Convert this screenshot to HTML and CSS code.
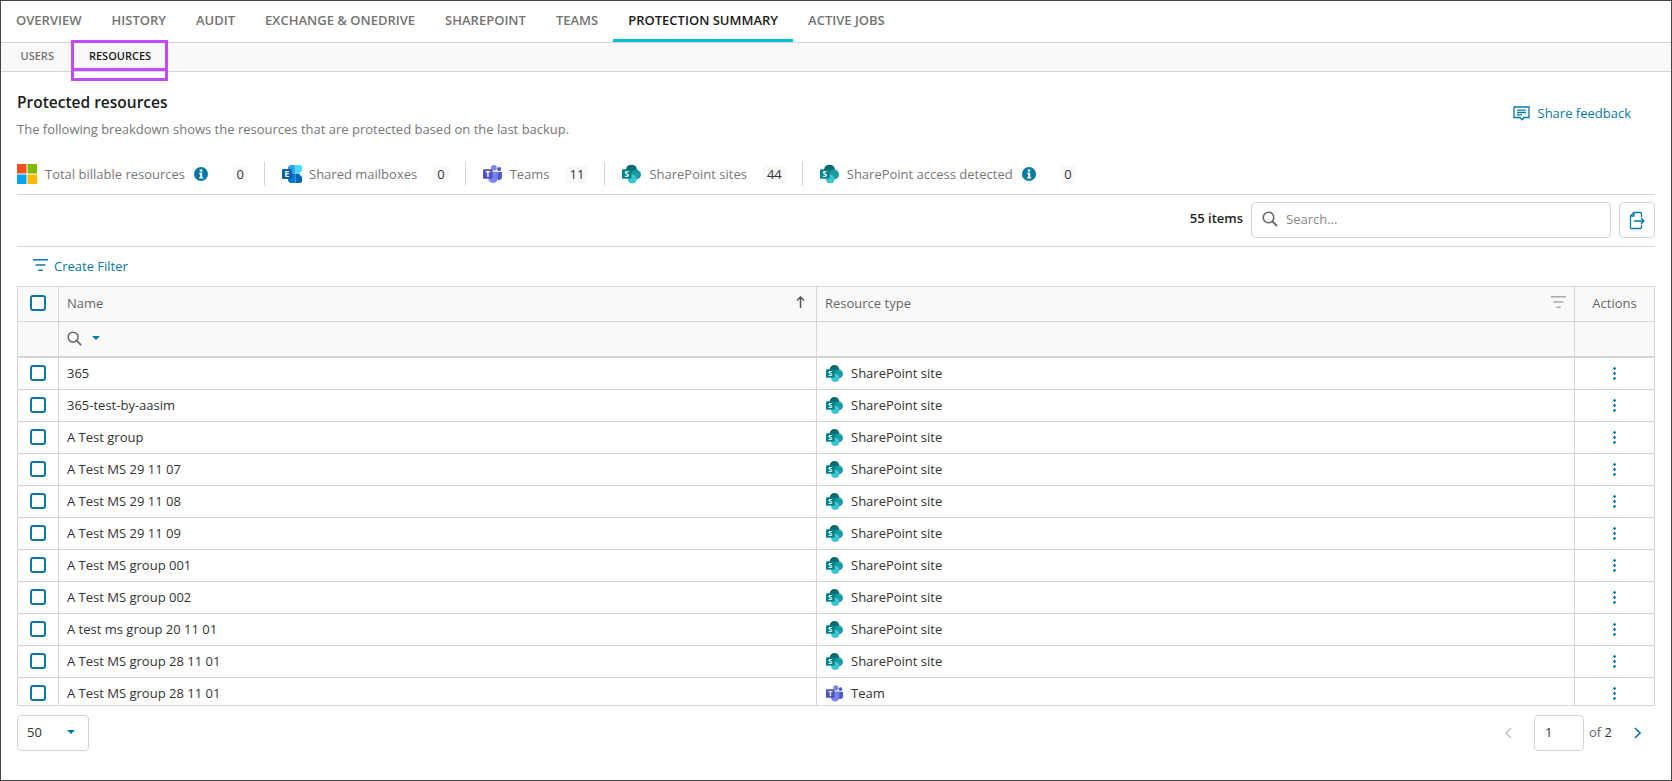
FILE: index.html
```html
<!DOCTYPE html>
<html lang="en">
<head>
    <meta charset="UTF-8">
    <title>Protection summary</title>
    <link rel="stylesheet" href="styles.css">
</head>
<body>
    <svg class="sprites" width="0" height="0">
        <symbol id="ic-ms" viewBox="0 0 20 20">
            <rect width="9.500" height="9.500" fill="#f25022"/>
            <rect x="10.500" width="9.500" height="9.500" fill="#7fba00"/>
            <rect y="10.500" width="9.500" height="9.500" fill="#00a4ef"/>
            <rect x="10.500" y="10.500" width="9.500" height="9.500" fill="#ffb900"/>
        </symbol>
        <symbol id="ic-exchange" viewBox="0 0 20 20">
            <path fill="#28a8ea" d="M8 1h5.500v9H6V3z"/>
            <path fill="#50d9ff" d="M13.500 1H18a2 2 0 0 1 2 2v4l-3 3h-3.500z"/>
            <path fill="#0078d4" d="M6 10h7.500v9H8l-2-2z"/>
            <path fill="#0364b8" d="M13.500 10H17l3 3v4a2 2 0 0 1-2 2h-4.500z"/>
            <rect y="5" width="10" height="10" rx="1" fill="#0f5ea8"/>
        </symbol>
        <symbol id="ic-teams" viewBox="0 0 20 20">
            <circle cx="17" cy="4.800" r="2.200" fill="#5059c9"/>
            <path fill="#5059c9" d="M13 8h7v5a3.500 3.500 0 0 1-7 0z"/>
            <circle cx="11.500" cy="3.400" r="3" fill="#7b83eb"/>
            <path fill="#7b83eb" d="M6 7.500h9.500V15a5 5 0 0 1-9.500 1.500z"/>
            <rect y="5" width="10" height="10" rx="1" fill="#4b53bc"/>
        </symbol>
        <symbol id="ic-sharepoint" viewBox="0 0 20 20">
            <circle cx="10" cy="5.800" r="5.800" fill="#036c70"/>
            <circle cx="14.700" cy="10.500" r="5.300" fill="#1a9ba1"/>
            <circle cx="10.800" cy="15.300" r="4.700" fill="#37c6d0"/>
            <rect y="5" width="10" height="10" rx="1" fill="#038387"/>
        </symbol>
        <symbol id="ic-info" viewBox="0 0 14 14">
            <circle cx="7" cy="7" r="7" fill="#0778a8"/>
            <circle cx="7" cy="3.600" r="1.400" fill="#fff"/>
            <path fill="#fff" d="M5.300 5.800h2.900v4.300h.9v1.400H5.200v-1.400h1V7.200h-.9z"/>
        </symbol>
        <symbol id="ic-filter" viewBox="0 0 15 13">
            <path fill="currentColor" d="M0 0h15v1.500H0zM2.500 5.200h10v1.500h-10zM5.300 10.500h4.400V12H5.300z"/>
        </symbol>
        <symbol id="ic-search" viewBox="0 0 16 16">
            <circle cx="6.500" cy="6.500" r="5.300" fill="none" stroke="currentColor" stroke-width="1.600"/>
            <path d="M10.500 10.500 15 15" fill="none" stroke="currentColor" stroke-width="1.800"/>
        </symbol>
    </svg>

    <div class="window">
        <nav class="tabs">
            <a>Overview</a>
            <a>History</a>
            <a>Audit</a>
            <a>Exchange &amp; OneDrive</a>
            <a>SharePoint</a>
            <a>Teams</a>
            <a class="active">Protection summary</a>
            <a>Active jobs</a>
        </nav>
        <nav class="subtabs">
            <a>Users</a>
            <a class="active">Resources</a>
        </nav>
        <div class="callout"></div>

        <main class="content">
            <div class="page-head">
                <div>
                    <h1>Protected resources</h1>
                    <p>The following breakdown shows the resources that are protected based on the last backup.</p>
                </div>
                <a class="feedback">
                    <svg width="17" height="15" viewBox="0 0 17 15" fill="none" stroke="currentColor" stroke-width="1.300">
                        <path d="M1 1h15v10.500h-5L9 13.800 7 11.500H1z"/>
                        <path d="M4 4.200h9M4 6.500h9M4 8.800h5"/>
                    </svg>
                    Share feedback
                </a>
            </div>

            <div class="stats">
                <div class="stat">
                    <svg class="stat-icon" viewBox="0 0 20 20"><use href="#ic-ms"/></svg>
                    <span>Total billable resources</span>
                    <svg class="info"><use href="#ic-info"/></svg>
                    <b class="count wide">0</b>
                </div>
                <div class="stat">
                    <svg class="stat-icon tight" viewBox="0 0 20 20"><use href="#ic-exchange"/><text x="5" y="13" class="ic-letter">E</text></svg>
                    <span>Shared mailboxes</span>
                    <b class="count">0</b>
                </div>
                <div class="stat">
                    <svg class="stat-icon narrow" viewBox="0 0 20 20"><use href="#ic-teams"/><text x="5" y="13" class="ic-letter">T</text></svg>
                    <span>Teams</span>
                    <b class="count">11</b>
                </div>
                <div class="stat">
                    <svg class="stat-icon narrow" viewBox="0 0 20 20"><use href="#ic-sharepoint"/><text x="5" y="13" class="ic-letter">S</text></svg>
                    <span>SharePoint sites</span>
                    <b class="count">44</b>
                </div>
                <div class="stat">
                    <svg class="stat-icon narrow" viewBox="0 0 20 20"><use href="#ic-sharepoint"/><text x="5" y="13" class="ic-letter">S</text></svg>
                    <span>SharePoint access detected</span>
                    <svg class="info"><use href="#ic-info"/></svg>
                    <b class="count wide">0</b>
                </div>
            </div>

            <div class="toolbar">
                <span class="total">55 items</span>
                <div class="search">
                    <svg width="16" height="16"><use href="#ic-search"/></svg>
                    <span>Search...</span>
                </div>
                <button class="export">
                    <svg width="16" height="19" viewBox="0 0 16 19" fill="none" stroke="currentColor" stroke-width="1.300">
                        <path d="M12.500 6V2.500a1 1 0 0 0-1-1H5L1.500 5v11.500a1 1 0 0 0 1 1h9a1 1 0 0 0 1-1V14"/>
                        <path d="M5 1.500V5H1.500M5 10h10M12 7l3 3-3 3"/>
                    </svg>
                </button>
            </div>

            <a class="create-filter">
                <svg width="15" height="13"><use href="#ic-filter"/></svg>
                Create Filter
            </a>

            <div class="grid-wrap">
                <table class="grid">
                    <colgroup>
                        <col class="col-check"><col class="col-name"><col class="col-type"><col>
                    </colgroup>
                    <thead>
                        <tr class="head-row">
                            <th><span class="check"></span></th>
                            <th>
                                <div class="th-inner">Name
                                    <svg width="9" height="12" viewBox="0 0 9 12" fill="none" stroke="#555" stroke-width="1.500"><path d="M4.500 12V1M1 4.500l3.500-3.500L8 4.500"/></svg>
                                </div>
                            </th>
                            <th>
                                <div class="th-inner">Resource type
                                    <svg class="type-filter" width="15" height="13"><use href="#ic-filter"/></svg>
                                </div>
                            </th>
                            <th class="center">Actions</th>
                        </tr>
                        <tr class="filter-row">
                            <th></th>
                            <th>
                                <div class="name-filter">
                                    <svg width="15" height="15"><use href="#ic-search"/></svg>
                                    <i class="caret"></i>
                                </div>
                            </th>
                            <th></th>
                            <th></th>
                        </tr>
                    </thead>
                    <tbody>
                        <tr><td><span class="check"></span></td><td>365</td><td><div class="type"><svg viewBox="0 0 20 20"><use href="#ic-sharepoint"/><text x="5" y="13" class="ic-letter">S</text></svg>SharePoint site</div></td><td class="center"><span class="kebab"></span></td></tr>
                        <tr><td><span class="check"></span></td><td>365-test-by-aasim</td><td><div class="type"><svg viewBox="0 0 20 20"><use href="#ic-sharepoint"/><text x="5" y="13" class="ic-letter">S</text></svg>SharePoint site</div></td><td class="center"><span class="kebab"></span></td></tr>
                        <tr><td><span class="check"></span></td><td>A Test group</td><td><div class="type"><svg viewBox="0 0 20 20"><use href="#ic-sharepoint"/><text x="5" y="13" class="ic-letter">S</text></svg>SharePoint site</div></td><td class="center"><span class="kebab"></span></td></tr>
                        <tr><td><span class="check"></span></td><td>A Test MS 29 11 07</td><td><div class="type"><svg viewBox="0 0 20 20"><use href="#ic-sharepoint"/><text x="5" y="13" class="ic-letter">S</text></svg>SharePoint site</div></td><td class="center"><span class="kebab"></span></td></tr>
                        <tr><td><span class="check"></span></td><td>A Test MS 29 11 08</td><td><div class="type"><svg viewBox="0 0 20 20"><use href="#ic-sharepoint"/><text x="5" y="13" class="ic-letter">S</text></svg>SharePoint site</div></td><td class="center"><span class="kebab"></span></td></tr>
                        <tr><td><span class="check"></span></td><td>A Test MS 29 11 09</td><td><div class="type"><svg viewBox="0 0 20 20"><use href="#ic-sharepoint"/><text x="5" y="13" class="ic-letter">S</text></svg>SharePoint site</div></td><td class="center"><span class="kebab"></span></td></tr>
                        <tr><td><span class="check"></span></td><td>A Test MS group 001</td><td><div class="type"><svg viewBox="0 0 20 20"><use href="#ic-sharepoint"/><text x="5" y="13" class="ic-letter">S</text></svg>SharePoint site</div></td><td class="center"><span class="kebab"></span></td></tr>
                        <tr><td><span class="check"></span></td><td>A Test MS group 002</td><td><div class="type"><svg viewBox="0 0 20 20"><use href="#ic-sharepoint"/><text x="5" y="13" class="ic-letter">S</text></svg>SharePoint site</div></td><td class="center"><span class="kebab"></span></td></tr>
                        <tr><td><span class="check"></span></td><td>A test ms group 20 11 01</td><td><div class="type"><svg viewBox="0 0 20 20"><use href="#ic-sharepoint"/><text x="5" y="13" class="ic-letter">S</text></svg>SharePoint site</div></td><td class="center"><span class="kebab"></span></td></tr>
                        <tr><td><span class="check"></span></td><td>A Test MS group 28 11 01</td><td><div class="type"><svg viewBox="0 0 20 20"><use href="#ic-sharepoint"/><text x="5" y="13" class="ic-letter">S</text></svg>SharePoint site</div></td><td class="center"><span class="kebab"></span></td></tr>
                        <tr><td><span class="check"></span></td><td>A Test MS group 28 11 01</td><td><div class="type"><svg viewBox="0 0 20 20"><use href="#ic-teams"/><text x="5" y="13" class="ic-letter">T</text></svg>Team</div></td><td class="center"><span class="kebab"></span></td></tr>
                    </tbody>
                </table>
            </div>

            <div class="pager-bar">
                <div class="page-size">50 <i class="caret"></i></div>
                <div class="pager">
                    <svg class="prev" width="7" height="12" viewBox="0 0 7 12" fill="none" stroke="#bbb" stroke-width="1.400"><path d="M6 1 1 6l5 5"/></svg>
                    <div class="page-input">1</div>
                    <span class="page-of"><span>of</span> 2</span>
                    <svg class="next" width="7" height="12" viewBox="0 0 7 12" fill="none" stroke="#0778a8" stroke-width="1.600"><path d="m1 1 5 5-5 5"/></svg>
                </div>
            </div>
        </main>
    </div>
</body>
</html>
```

FILE: styles.css
```css
* {
    box-sizing: border-box;
}
body {
    margin: 0;
    background: #fff;
    color: #333;
    font-family: "Open Sans", "Liberation Sans", sans-serif;
    font-size: 13px;
}
.sprites {
    display: block;
    height: 0;
}
.ic-letter {
    fill: #fff;
    font-family: "Open Sans", sans-serif;
    font-size: 8.500px;
    font-weight: 700;
    text-anchor: middle;
}
.window {
    position: relative;
    height: 781px;
    border: 1px solid #444;
    overflow: hidden;
}

/* tabs */
.tabs {
    display: flex;
    height: 42px;
    border-bottom: 1px solid #d5d5d5;
}
.tabs a {
    padding: 0 15px;
    line-height: 39px;
    font-weight: 600;
    text-transform: uppercase;
    color: #737373;
}
.tabs a.active {
    position: relative;
    color: #1a1a1a;
}
.tabs a.active::after {
    content: "";
    position: absolute;
    left: 0;
    right: 0;
    bottom: 0;
    height: 3px;
    background: #00bfd3;
}
.subtabs {
    display: flex;
    height: 29px;
    padding-left: 2px;
    background: #f9f9f9;
    border-bottom: 1px solid #d5d5d5;
}
.subtabs a {
    padding: 0 17.500px;
    line-height: 26px;
    font-size: 11px;
    font-weight: 600;
    text-transform: uppercase;
    color: #737373;
}
.subtabs a.active {
    color: #1a1a1a;
}
.callout {
    position: absolute;
    left: 70px;
    top: 39px;
    width: 97px;
    height: 41px;
    border: 3px solid #c04cfd;
}
.callout::after {
    content: "";
    position: absolute;
    left: 0;
    right: 0;
    top: 25px;
    height: 3px;
    background: #c04cfd;
}

/* page */
.content {
    padding: 0 16px;
}
.page-head {
    display: flex;
    justify-content: space-between;
    padding-top: 19px;
}
h1 {
    margin: 0;
    font-size: 15.500px;
    line-height: 22px;
    font-weight: 600;
    color: #1a1a1a;
}
.page-head p {
    margin: 7px 0 0;
    line-height: 18px;
    color: #777;
}
.feedback {
    display: flex;
    align-items: center;
    gap: 8px;
    height: 22px;
    margin: 11px 24px 0 0;
    color: #0778a8;
}
.stats {
    display: flex;
    height: 33px;
    margin-top: 24px;
    padding-bottom: 8px;
    border-bottom: 1px solid #d5d5d5;
}
.stat {
    display: flex;
    align-items: center;
    gap: 8px;
    padding-right: 16px;
    margin-right: 17px;
    border-right: 1px solid #d5d5d5;
    color: #777;
}
.stat:last-child {
    border-right: none;
}
.stat-icon {
    width: 20px;
    height: 20px;
}
.stat-icon.narrow {
    width: 19px;
}
.stat-icon.tight {
    margin-right: -1px;
}
.info {
    width: 14px;
    height: 14px;
    margin-left: 1px;
}
.count {
    margin-left: 8px;
    padding: 0 4px;
    min-width: 15px;
    line-height: 18px;
    border-radius: 4px;
    background: #f9f9fc;
    font-weight: 400;
    text-align: center;
    color: #333;
}
.count.wide {
    margin-left: 16.500px;
}
.toolbar {
    display: flex;
    justify-content: flex-end;
    gap: 8px;
    height: 52px;
    padding: 7px 0 8px;
    border-bottom: 1px solid #d5d5d5;
}
.total {
    line-height: 32px;
    font-weight: 600;
    color: #222;
}
.search {
    display: flex;
    align-items: center;
    gap: 8px;
    width: 360px;
    height: 36px;
    padding: 0 0 2px 10px;
    border: 1px solid #d5d5d5;
    border-radius: 4px;
    color: #666;
}
.search span {
    color: #888;
}
.export {
    display: flex;
    align-items: center;
    justify-content: center;
    width: 36px;
    height: 36px;
    padding: 0;
    border: 1px solid #d5d5d5;
    border-radius: 4px;
    background: #fff;
    color: #0778a8;
}
.create-filter {
    display: flex;
    align-items: center;
    gap: 6px;
    height: 39px;
    padding: 0 0 2px 16px;
    color: #0778a8;
}

/* table */
.grid-wrap {
    height: 420px;
    border: 1px solid #d5d5d5;
    overflow: hidden;
}
.grid {
    width: 100%;
    table-layout: fixed;
    border-collapse: separate;
    border-spacing: 0;
}
.col-check {
    width: 41px;
}
.col-name,
.col-type {
    width: 758px;
}
.grid th,
.grid td {
    padding: 0 8px 2px;
    border-right: 1px solid #d5d5d5;
    border-bottom: 1px solid #d5d5d5;
    text-align: left;
    font-weight: 400;
}
.grid th:last-child,
.grid td:last-child {
    border-right: none;
}
.grid th:first-child,
.grid td:first-child {
    padding-left: 12px;
    padding-right: 0;
}
.grid th {
    background: #f9f9f9;
    color: #666;
}
.head-row th {
    height: 35px;
}
.filter-row th {
    height: 36px;
    border-bottom-width: 2px;
}
.grid td {
    height: 32px;
}
.grid .center {
    text-align: center;
}
.th-inner {
    display: flex;
    align-items: center;
    justify-content: space-between;
}
.th-inner svg {
    margin: -2px 3px 0 0;
}
.th-inner .type-filter {
    color: #aaa;
    margin-right: 0;
}
.name-filter {
    display: flex;
    align-items: center;
    gap: 10px;
    color: #666;
}
.check {
    display: block;
    width: 16px;
    height: 16px;
    border: 2px solid #0778a8;
    border-radius: 3px;
    background: #fff;
}
.type {
    display: flex;
    align-items: center;
    gap: 8px;
}
.type svg {
    width: 17px;
    height: 17px;
    margin: 2px 0 0 1px;
}
.kebab {
    display: block;
    width: 3px;
    height: 15px;
    margin: 2px auto 0;
    background: radial-gradient(circle at center, #0778a8 1.100px, transparent 1.500px) 0 0 / 3px 5px;
}
.caret {
    display: block;
    width: 0;
    height: 0;
    border-left: 4px solid transparent;
    border-right: 4px solid transparent;
    border-top: 4px solid #0778a8;
}

/* pager */
.pager-bar {
    display: flex;
    align-items: center;
    justify-content: space-between;
    margin-top: 9px;
}
.page-size {
    display: flex;
    align-items: center;
    justify-content: space-between;
    width: 72px;
    height: 36px;
    padding: 0 13px 2px 9px;
    border: 1px solid #d5d5d5;
    border-radius: 4px;
}
.pager {
    display: flex;
    align-items: center;
    margin-right: 14px;
}
.prev {
    margin-right: 22px;
}
.page-input {
    width: 50px;
    height: 36px;
    padding-left: 10px;
    line-height: 32px;
    border: 1px solid #d5d5d5;
    border-radius: 4px;
}
.page-of {
    margin-left: 5px;
    padding-bottom: 2px;
}
.page-of span {
    color: #666;
}
.next {
    margin-left: 22px;
}
```
